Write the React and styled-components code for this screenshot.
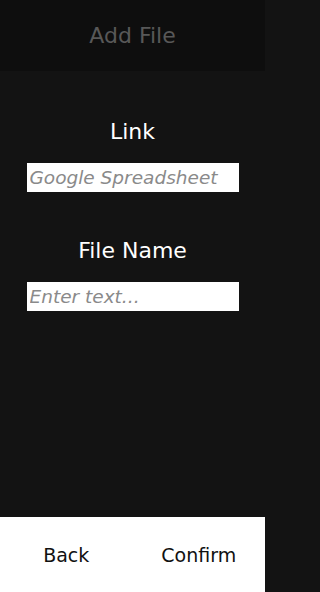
import React from "react";
import styled, { createGlobalStyle } from "styled-components";

const Global = createGlobalStyle`
  html, body { margin: 0; padding: 0; background: #131313; }
  #root { height: 592px; }
  * { box-sizing: border-box; }
`;

const Screen = styled.div`
  width: 265px;
  height: 592px;
  display: flex;
  flex-direction: column;
  background: #131313;
  font-family: "DejaVu Sans", sans-serif;
`;

const Header = styled.div`
  height: 71px;
  flex: none;
  background: #0e0e0e;
  display: flex;
  align-items: center;
  justify-content: center;
  color: #585858;
  font-size: 22px;
`;

const Body = styled.div`
  flex: 1;
  display: flex;
  flex-direction: column;
  align-items: center;
  padding-top: 48px;
`;

const Label = styled.div`
  color: #ffffff;
  font-size: 22px;
  line-height: 26px;
  margin-bottom: 18px;
  margin-top: ${(p) => p.$top || 0}px;
`;

const Input = styled.input`
  width: 212px;
  height: 29px;
  border: none;
  outline: none;
  background: #ffffff;
  padding: 0 3px;
  font-family: "DejaVu Sans", sans-serif;
  font-style: italic;
  font-size: 18.5px;
  color: #222;
  &::placeholder { color: #8a8a8a; }
`;

const Footer = styled.div`
  height: 75px;
  flex: none;
  background: #ffffff;
  display: grid;
  grid-template-columns: 1fr 1fr;
  align-items: center;
`;

const FooterButton = styled.button`
  border: none;
  background: transparent;
  font-family: "DejaVu Sans", sans-serif;
  font-size: 19px;
  color: #111;
  padding: 0;
  text-align: center;
`;

export default function App() {
  return (
    <>
      <Global />
      <Screen>
        <Header>Add File</Header>
        <Body>
          <Label>Link</Label>
          <Input placeholder="Google Spreadsheet" />
          <Label $top={46}>File Name</Label>
          <Input placeholder="Enter text..." />
        </Body>
        <Footer>
          <FooterButton>Back</FooterButton>
          <FooterButton>Confirm</FooterButton>
        </Footer>
      </Screen>
    </>
  );
}
